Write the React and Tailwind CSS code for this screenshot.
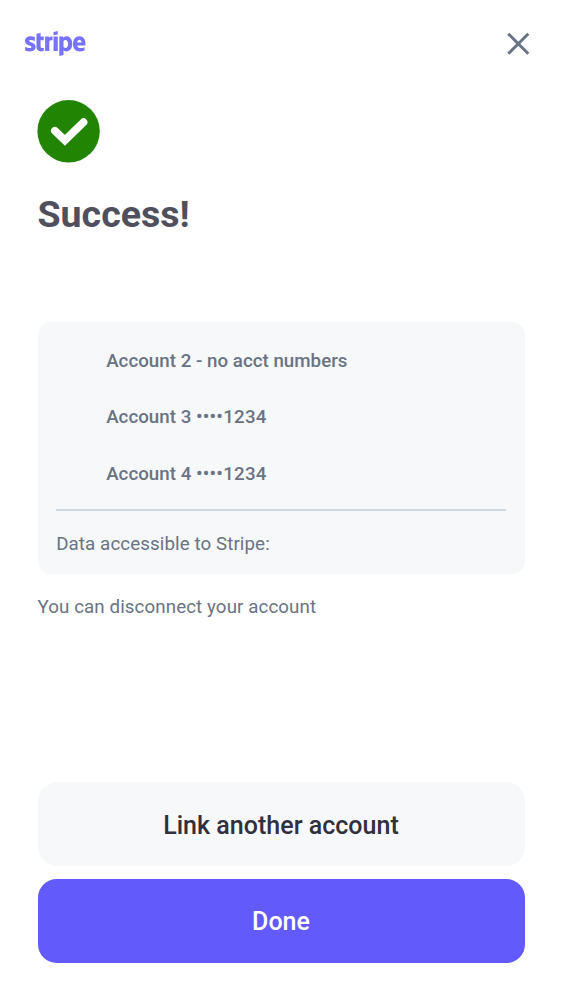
import { FaStripe } from "react-icons/fa";

const accounts = [
  { name: "Account 2 - no acct numbers", digits: "" },
  { name: "Account 3 ", digits: "••••1234" },
  { name: "Account 4 ", digits: "••••1234" },
];

function Header() {
  return (
    <header className="flex h-[87px] items-center justify-between pl-[25px] pr-[32px]">
      <FaStripe className="h-[49px] w-[60.5px] text-[#7772fb]" aria-label="stripe" />
      <button aria-label="Close" className="text-[#687385]">
        <svg width="23" height="23" viewBox="0 0 23 23" fill="none" stroke="currentColor" strokeWidth="3">
          <path d="M1.3 1.7 21.3 21.7M21.3 1.7 1.3 21.7" />
        </svg>
      </button>
    </header>
  );
}

function SuccessIcon() {
  return (
    <svg className="-ml-[0.5px] block" width="63" height="63" viewBox="0 0 63 63" fill="none">
      <circle cx="31.6" cy="31.3" r="31.2" fill="#228403" />
      <path d="M17.9 30.8 27.9 40.4 46.5 22.2" stroke="white" strokeWidth="7.8" strokeLinecap="round" />
    </svg>
  );
}

export default function App() {
  return (
    <div className="flex h-[1000px] w-[562px] flex-col bg-white font-['Roboto',sans-serif]">
      <Header />
      <main className="flex flex-1 flex-col px-[37.5px] pt-[13px]">
        <SuccessIcon />
        <h1 className="mt-[26px] text-[37.5px] leading-[50px] font-bold text-[#4f4f5d]">Success!</h1>
        <section className="mt-[83px] h-[252px] rounded-[12.5px] bg-[#f6f8fa] px-[18.7px] pt-[21px] text-[18.73px] text-[#6a7383]">
          <ul className="flex flex-col gap-[18.9px] pl-[50px] font-medium leading-[37.5px]">
            {accounts.map(({ name, digits }) => (
              <li key={name} className="tracking-[0.02px]">
                {name}
                <span className="tracking-[0.25px]">{digits}</span>
              </li>
            ))}
          </ul>
          <hr className="mt-[16.1px] border-t-2 border-[#d0d6df]" />
          <p className="mt-[18px] leading-[31px] tracking-[0.1px]">Data accessible to Stripe:</p>
        </section>
        <p className="mt-[18px] text-[18.73px] leading-[31px] tracking-[0.1px] text-[#6a7383]">
          You can disconnect your account
        </p>
        <div className="mt-auto mb-[37.5px] flex flex-col gap-[12.5px] text-[25px] font-medium">
          <button className="h-[83.8px] rounded-[18.7px] bg-[#f6f8fa] pt-[2.4px] tracking-[0.02px] text-[#30313d]">Link another account</button>
          <button className="h-[83.8px] rounded-[18.7px] bg-[#625afa] pt-[2px] text-white">Done</button>
        </div>
      </main>
    </div>
  );
}
